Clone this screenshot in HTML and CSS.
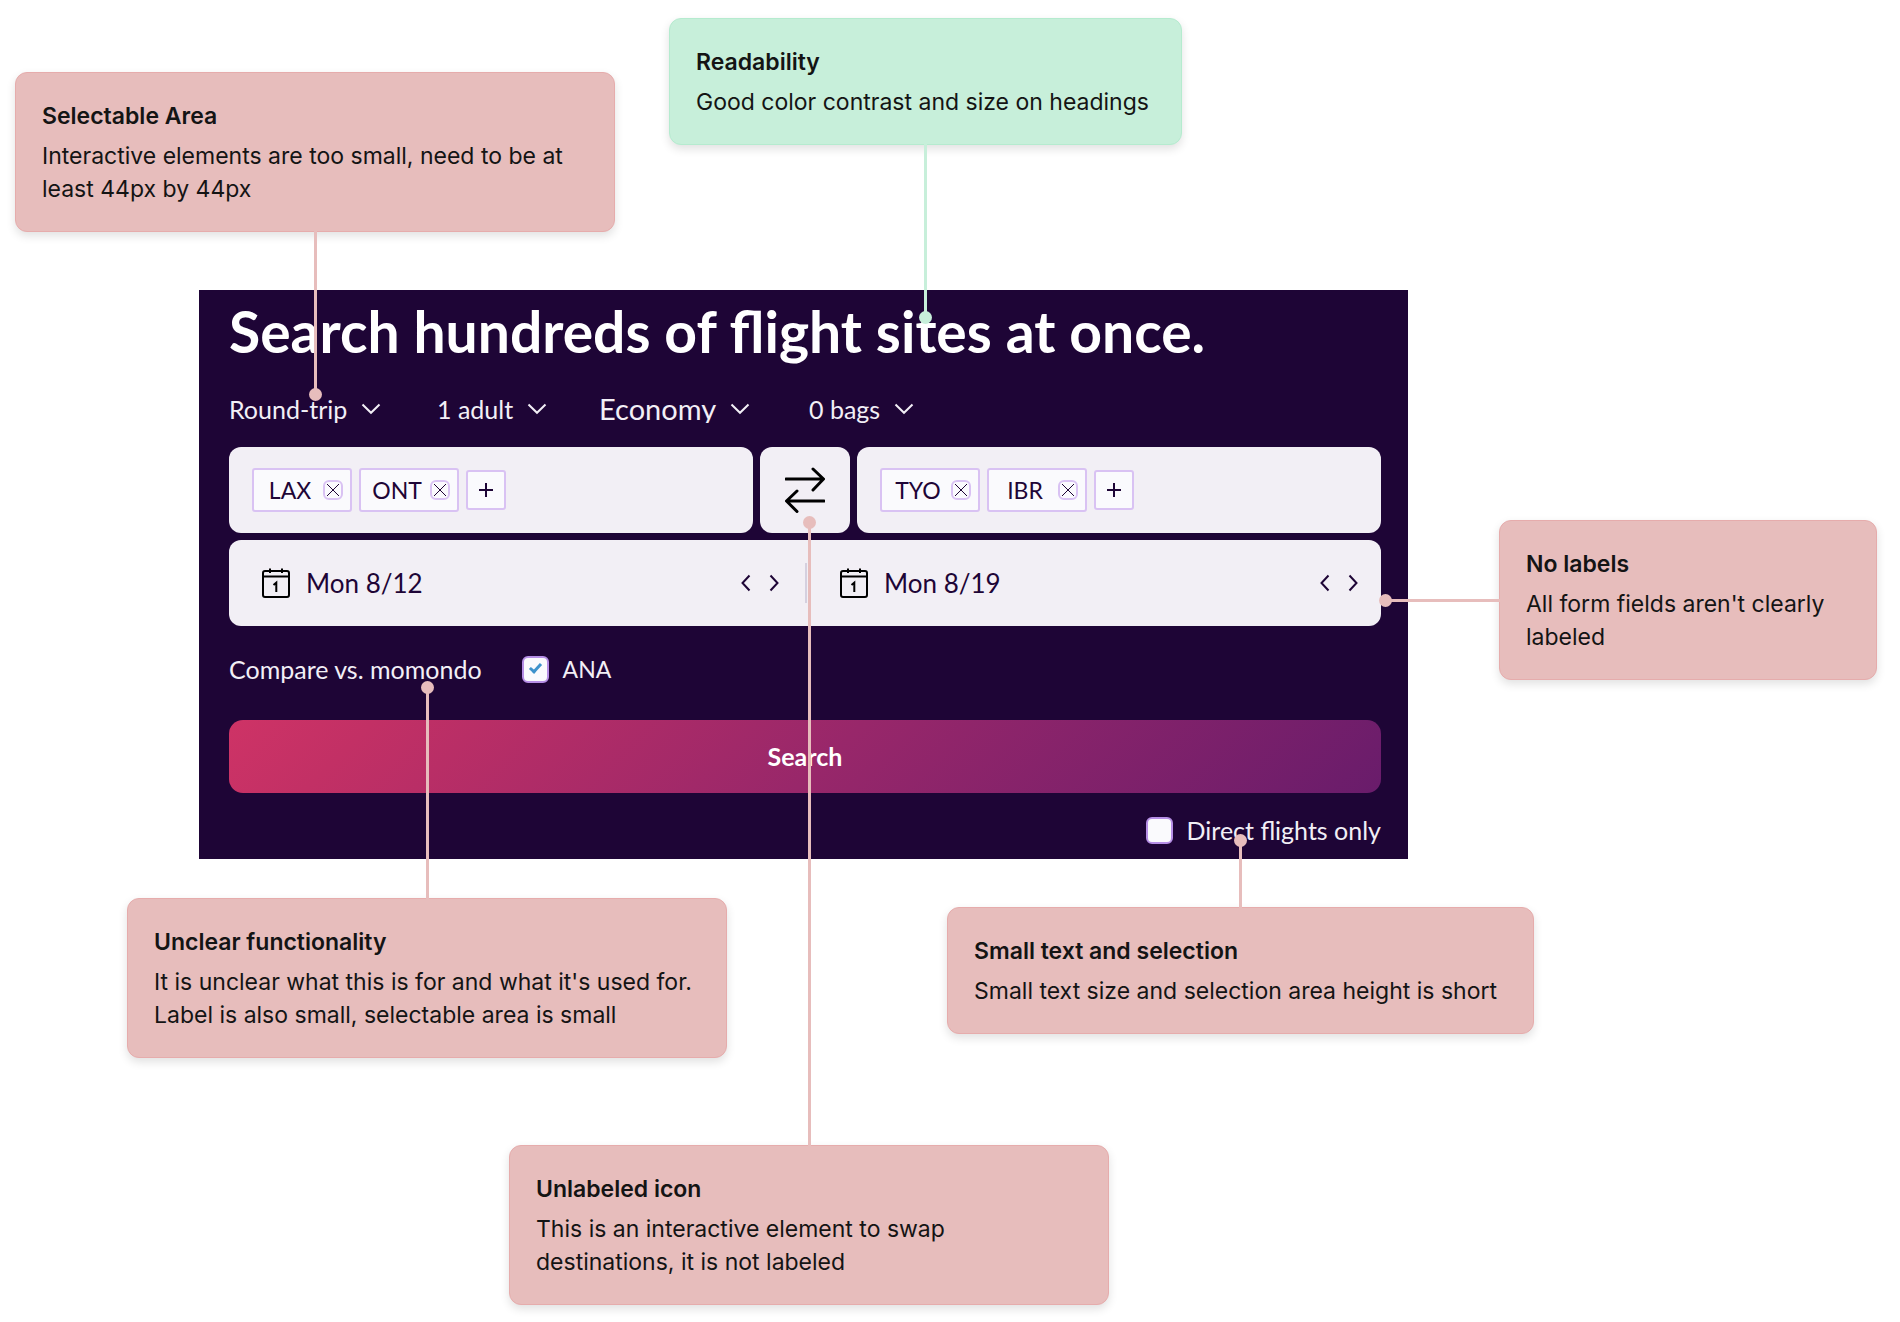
FILE: index.html
```html
<!DOCTYPE html>
<html lang="en">
<head>
<meta charset="utf-8">
<title>Flight search accessibility review</title>
<link rel="stylesheet" href="styles.css">
</head>
<body>
<svg class="defs" aria-hidden="true">
  <symbol id="chevron" viewBox="0 0 20 12"><path d="M1.5 1.5 10 9.8 18.5 1.5"/></symbol>
  <symbol id="cross" viewBox="0 0 16 16"><path d="M2 2 14 14M14 2 2 14"/></symbol>
  <symbol id="plus" viewBox="0 0 14 14"><path d="M7 0V14M0 7H14"/></symbol>
  <symbol id="prev" viewBox="0 0 10 18"><path d="M8.500 1.500 1.500 9 8.500 16.500"/></symbol>
  <symbol id="next" viewBox="0 0 10 18"><path d="M1.500 1.500 8.500 9 1.500 16.500"/></symbol>
  <symbol id="calendar" viewBox="0 0 28 30">
    <rect x="1" y="3" width="26" height="26" rx="2"/>
    <path d="M1 8.500H27M8 .5V5M20 .5V5"/>
    <path d="M11.500 17 14.300 14.700V24"/>
  </symbol>
</svg>
<main class="board">
  <form class="panel">
    <h1 class="title">Search hundreds of flight sites at once.</h1>

    <div class="filters">
      <label class="filter"><select aria-label="Trip type"><option>Round-trip</option></select><svg class="chevron"><use href="#chevron"/></svg></label>
      <label class="filter"><select aria-label="Travelers"><option>1 adult</option></select><svg class="chevron"><use href="#chevron"/></svg></label>
      <label class="filter filter-large"><select aria-label="Cabin"><option>Economy</option></select><svg class="chevron"><use href="#chevron"/></svg></label>
      <label class="filter"><select aria-label="Bags"><option>0 bags</option></select><svg class="chevron"><use href="#chevron"/></svg></label>
    </div>

    <div class="route">
      <div class="field">
        <span class="chip"><span class="code">LAX</span><button type="button" class="remove" aria-label="Remove LAX"><svg><use href="#cross"/></svg></button></span>
        <span class="chip"><span class="code">ONT</span><button type="button" class="remove" aria-label="Remove ONT"><svg><use href="#cross"/></svg></button></span>
        <button type="button" class="add" aria-label="Add origin"><svg><use href="#plus"/></svg></button>
      </div>
      <button type="button" class="swap" aria-label="Swap destinations">
        <svg viewBox="0 0 40 46"><path d="M1 12H38M28 2 38.500 12 28 23M39 34H2M12 24 1.500 34 12 44.500"/></svg>
      </button>
      <div class="field">
        <span class="chip"><span class="code">TYO</span><button type="button" class="remove" aria-label="Remove TYO"><svg><use href="#cross"/></svg></button></span>
        <span class="chip"><span class="code">IBR</span><button type="button" class="remove" aria-label="Remove IBR"><svg><use href="#cross"/></svg></button></span>
        <button type="button" class="add" aria-label="Add destination"><svg><use href="#plus"/></svg></button>
      </div>
    </div>

    <div class="dates">
      <div class="date">
        <svg class="calendar"><use href="#calendar"/></svg>
        <input type="text" value="Mon 8/12" aria-label="Departure date">
        <button type="button" class="step" aria-label="Earlier departure"><svg><use href="#prev"/></svg></button>
        <button type="button" class="step" aria-label="Later departure"><svg><use href="#next"/></svg></button>
      </div>
      <div class="date">
        <svg class="calendar"><use href="#calendar"/></svg>
        <input type="text" value="Mon 8/19" aria-label="Return date">
        <button type="button" class="step" aria-label="Earlier return"><svg><use href="#prev"/></svg></button>
        <button type="button" class="step" aria-label="Later return"><svg><use href="#next"/></svg></button>
      </div>
    </div>

    <div class="compare">
      <span>Compare vs. momondo</span>
      <label class="tick airline"><input type="checkbox" checked><span>ANA</span></label>
    </div>

    <button type="submit" class="search">Search</button>

    <label class="tick direct"><input type="checkbox"><span>Direct flights only</span></label>
  </form>

  <section class="note note-selectable">
    <h2>Selectable Area</h2>
    <p>Interactive elements are too small, need to be at least 44px by 44px</p>
    <i class="pin"></i>
  </section>
  <section class="note note-good note-readability">
    <h2>Readability</h2>
    <p>Good color contrast and size on headings</p>
    <i class="pin"></i>
  </section>
  <section class="note note-labels">
    <h2>No labels</h2>
    <p>All form fields aren't clearly labeled</p>
    <i class="pin"></i>
  </section>
  <section class="note note-unclear">
    <h2>Unclear functionality</h2>
    <p>It is unclear what this is for and what it's used for. Label is also small, selectable area is small</p>
    <i class="pin"></i>
  </section>
  <section class="note note-small">
    <h2>Small text and selection</h2>
    <p>Small text size and selection area height is short</p>
    <i class="pin"></i>
  </section>
  <section class="note note-icon">
    <h2>Unlabeled icon</h2>
    <p>This is an interactive element to swap<br>destinations, it is not labeled</p>
    <i class="pin"></i>
  </section>
</main>
</body>
</html>
```

FILE: styles.css
```css
*, *::before, *::after { box-sizing: border-box; }

body {
  margin: 0;
  background: #fff;
  color: #141414;
  font-family: Inter, "Liberation Sans", sans-serif;
}

h1, h2, p { margin: 0; }

button, input, select {
  margin: 0;
  padding: 0;
  border: 0;
  background: none;
  color: inherit;
  font: inherit;
}

svg {
  display: block;
  flex: none;
  fill: none;
  stroke: currentColor;
}

.defs { position: absolute; width: 0; height: 0; }

.board {
  position: relative;
  padding: 290px 492px 463px 199px;
}

/* Search panel */

.panel {
  display: flex;
  flex-direction: column;
  padding: 11px 27px 15px 30px;
  background: #1e0536;
  color: #f2eff6;
  font-family: Lato, "Liberation Sans", sans-serif;
  font-size: 25px;
  line-height: 28px;
}

.title {
  color: #fff;
  font-size: 57px;
  font-weight: 700;
  line-height: 60px;
}

.filters {
  display: grid;
  grid-template-columns: 208px 162px 210px auto;
  margin: 28px 0 18px;
}

.filter {
  display: flex;
  align-items: center;
  gap: 13px;
  height: 40px;
}

.filter-large { font-size: 29px; }
.filter select { appearance: none; }
.chevron { width: 20px; height: 12px; stroke-width: 2; }

.route {
  display: grid;
  grid-template-columns: 1fr 90px 1fr;
  gap: 7px;
  color: #1e0536;
}

.field {
  display: flex;
  align-items: center;
  gap: 7px;
  height: 86px;
  padding: 0 23px;
  border-radius: 12px;
  background: #f2eff5;
}

.chip {
  display: flex;
  align-items: center;
  width: 100px;
  height: 44px;
  padding: 0 7px 0 3px;
  border: 2px solid #d9c2f3;
  border-radius: 3px;
  background: #fafafd;
  font-size: 23px;
}

.code { flex: 1; text-align: center; }

.remove {
  display: grid;
  place-items: center;
  width: 20px;
  height: 20px;
  border: 2px solid #d9c2f3;
  border-radius: 6px;
}

.remove svg { width: 16px; height: 16px; }

.add {
  display: grid;
  place-items: center;
  width: 40px;
  height: 40px;
  border: 2px solid #d9c2f3;
  border-radius: 3px;
  background: #fafafd;
}

.add svg { width: 14px; height: 14px; stroke-width: 2; }

.swap {
  display: grid;
  place-items: center;
  border-radius: 12px;
  background: #f2eff5;
  color: #000;
}

.swap svg {
  width: 40px;
  height: 46px;
  stroke-width: 3;
  stroke-linecap: round;
  stroke-linejoin: round;
}

.dates {
  display: grid;
  grid-template-columns: 1fr 1fr;
  margin-top: 7px;
  border-radius: 12px;
  background: #f2eff5;
  color: #1e0536;
}

.date {
  display: flex;
  align-items: center;
  height: 86px;
  padding: 0 26px 0 33px;
  font-size: 26px;
}

.date + .date {
  padding: 0 23px 0 35px;
  background: linear-gradient(#d5d0df, #d5d0df) left center / 2px 40px no-repeat;
}

.calendar { width: 28px; height: 30px; color: #000; stroke-width: 2; }
.date input { flex: 1; min-width: 0; height: 40px; margin-left: 16px; }
.step { width: 10px; height: 18px; margin-left: 18px; }
.step svg { width: 10px; height: 18px; stroke-width: 2; }

.compare {
  display: flex;
  align-items: center;
  gap: 40px;
  margin: 29px 0 37px;
}

.tick { display: flex; align-items: center; gap: 14px; }
.airline { font-size: 23px; }

.tick input {
  appearance: none;
  width: 27px;
  height: 27px;
  border: 2px solid #b68fe6;
  border-radius: 6px;
  background: #fafafd;
}

.tick input:checked {
  display: grid;
  place-items: center;
}

.tick input:checked::before {
  content: "";
  width: 7px;
  height: 12px;
  margin-bottom: 4px;
  border: solid #3e92cc;
  border-width: 0 3px 3px 0;
  transform: rotate(42deg);
}

.search {
  height: 73px;
  padding-bottom: 2px;
  border-radius: 14px;
  background: linear-gradient(135deg, #ce3366, #c23065 12%, #98276a 52%, #691c6b);
  color: #fff;
  font-weight: 700;
}

.direct { align-self: flex-end; margin-top: 23px; }

/* Notes pinned around the panel */

.note {
  --tone: #e7bdbc;
  position: absolute;
  padding: 27px 24px 25px 26px;
  border: 1px solid #e6acac;
  border-radius: 12px;
  background: var(--tone);
  box-shadow: 0 4px 10px rgba(0, 0, 0, .12);
  font-size: 23px;
  line-height: 33px;
}

.note h2 {
  margin-bottom: 7px;
  font-size: 23px;
  font-weight: 600;
}

.note-good { --tone: #c7efda; border-color: #b5ebcf; }

.note-selectable { left: 15px; top: 72px; width: 600px; }
.note-readability { left: 669px; top: 18px; width: 513px; }
.note-labels { left: 1499px; top: 520px; width: 378px; }
.note-unclear { left: 127px; top: 898px; width: 600px; }
.note-small { left: 947px; top: 907px; width: 587px; }
.note-icon { left: 509px; top: 1145px; width: 600px; }

.pin {
  position: absolute;
  width: 3px;
  background: var(--tone);
}

.pin::after {
  content: "";
  position: absolute;
  left: -5px;
  width: 13px;
  height: 13px;
  border-radius: 50%;
  background: var(--tone);
}

.note-selectable .pin { left: 298px; top: 100%; height: 164px; }
.note-readability .pin { left: 254px; top: 100%; height: 174px; }
.note-selectable .pin::after,
.note-readability .pin::after { bottom: -6px; }

.note-unclear .pin { left: 298px; bottom: 100%; height: 212px; }
.note-small .pin { left: 291px; bottom: 100%; height: 68px; }
.note-icon .pin { left: 298px; bottom: 100%; height: 624px; }
.note-unclear .pin::after,
.note-small .pin::after,
.note-icon .pin::after { top: -6px; }

.note-labels .pin { right: 100%; top: 78px; width: 115px; height: 3px; }
.note-labels .pin::after { left: -6px; top: -5px; }
```
